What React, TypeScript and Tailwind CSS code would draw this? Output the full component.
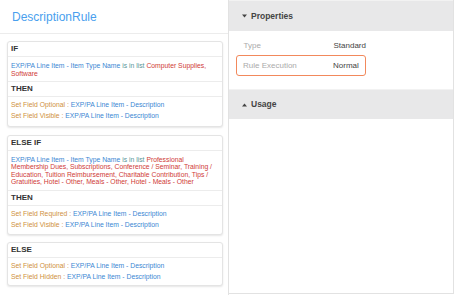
const BLUE = "text-[#3b87d3]";
const RED = "text-[#cf3b37]";
const ORANGE = "text-[#cf9140]";
const TEAL = "text-[#5a9698]";

function SectionHeader({ label }: { label: string }) {
  return (
    <div className="h-[15px] flex items-center px-[3px] border-b border-[#ececec] text-[8px] font-bold text-[#333]">
      {label}
    </div>
  );
}

function Condition({ values }: { values: string }) {
  return (
    <div className="px-[3px] pt-[5px] pb-[4px] border-b border-[#ececec] text-[6.8px] leading-[7.5px]">
      <span className={BLUE}>EXP/PA Line Item - Item Type Name </span>
      <span className={TEAL}>is in list </span>
      <span className={RED}>{values}</span>
    </div>
  );
}

function Actions({ items, pb = "pb-[5px]" }: { items: string[]; pb?: string }) {
  return (
    <div className={`px-[3px] pt-[2px] ${pb} text-[6.8px] leading-[11px]`}>
      {items.map((a) => (
        <div key={a}>
          <span className={ORANGE}>{a} : </span>
          <span className={BLUE}>EXP/PA Line Item - Description</span>
        </div>
      ))}
    </div>
  );
}

function Card({ children }: { children: React.ReactNode }) {
  return (
    <div className="bg-white border border-[#e4e4e4] rounded-[3px] shadow-[0_1px_2px_rgba(0,0,0,0.1)]">
      {children}
    </div>
  );
}

function Caret({ up = false }: { up?: boolean }) {
  return (
    <svg width="5" height="4" viewBox="0 0 5 4" className="mr-[4px]">
      <path d={up ? "M0 3.5 L2.5 0.5 L5 3.5 Z" : "M0 0.5 L5 0.5 L2.5 3.5 Z"} fill="#444" />
    </svg>
  );
}

export default function App() {
  return (
    <div className="w-[454px] h-[295px] flex bg-white font-['Liberation_Sans',Arial,sans-serif] overflow-hidden">
      {/* Rule builder */}
      <div className="w-[229px] shrink-0 border-r border-[#e2e2e2]">
        <div className="h-[34px] flex items-center px-[12px] border-b border-[#ececec]">
          <h1 className="text-[12px] text-[#4a9fee]">DescriptionRule</h1>
        </div>
        <div className="px-[7px] pt-[7px] pr-[5px] flex flex-col gap-[7.5px]">
          <Card>
            <SectionHeader label="IF" />
            <Condition values="Computer Supplies, Software" />
            <SectionHeader label="THEN" />
            <Actions items={["Set Field Optional", "Set Field Visible"]} />
          </Card>
          <Card>
            <SectionHeader label="ELSE IF" />
            <Condition values="Professional Membership Dues, Subscriptions, Conference / Seminar, Training / Education, Tuition Reimbursement, Charitable Contribution, Tips / Gratuities, Hotel - Other, Meals - Other, Hotel - Meals - Other" />
            <SectionHeader label="THEN" />
            <Actions items={["Set Field Required", "Set Field Visible"]} pb="pb-[4px]" />
          </Card>
          <Card>
            <SectionHeader label="ELSE" />
            <Actions items={["Set Field Optional", "Set Field Hidden"]} pb="pb-[3px]" />
          </Card>
        </div>
      </div>

      {/* Side panel */}
      <div className="flex-1 h-[294px] border-r border-b border-[#e2e2e2]">
        <div className="h-[31px] bg-[#e8e8e9] border-t border-[#f2f2f2] flex items-center pl-[13px] text-[8.5px] font-bold text-[#444]">
          <Caret />
          Properties
        </div>
        <div className="h-[58px] px-[7px] pt-[8px] text-[8px]">
          <div className="h-[14px] flex items-center pl-[7.5px]">
            <span className="w-[90px] text-[#aaa]">Type</span>
            <span className="text-[#444]">Standard</span>
          </div>
          <div className="mt-[2px] w-[130px] h-[21px] flex items-center pl-[6px] border-[1.5px] border-[#f2895c] rounded-[3px]">
            <span className="w-[90px] text-[#aaa]">Rule Execution</span>
            <span className="text-[#444]">Normal</span>
          </div>
        </div>
        <div className="h-[30px] bg-[#e8e8e9] border-t border-[#f2f2f2] flex items-center pl-[13px] text-[8.5px] font-bold text-[#444]">
          <Caret up />
          Usage
        </div>
      </div>
    </div>
  );
}
